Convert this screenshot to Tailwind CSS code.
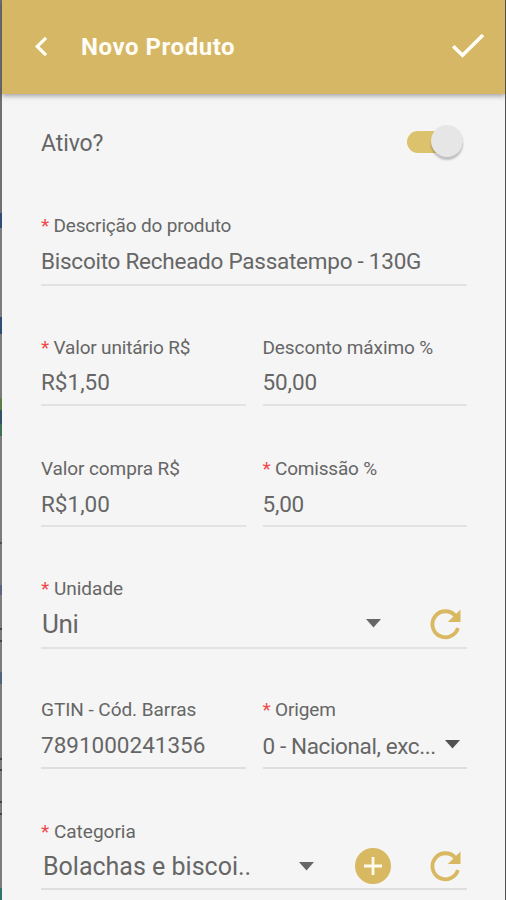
<!DOCTYPE html>
<html lang="pt-BR">
<head>
  <meta charset="UTF-8">
  <title>Novo Produto</title>
  <script src="https://cdn.jsdelivr.net/npm/@tailwindcss/browser@4"></script>
</head>
<body class="flex w-[506px] h-[900px] overflow-hidden bg-[#f5f5f5] font-[Roboto,sans-serif] text-[#666]">

  <!-- page behind, left edge -->
  <div class="w-[2px] h-full shrink-0 bg-[#7c7c7e] flex flex-col">
    <div class="h-[213px] bg-[#707074]"></div>
    <div class="h-[15px] bg-[#304d78]"></div>
    <div class="h-[89px]"></div>
    <div class="h-[17px] bg-[#304d78]"></div>
    <div class="h-[64px]"></div>
    <div class="h-[12px] bg-[#5d7d48]"></div>
    <div class="h-[14px] bg-[#35506a]"></div>
    <div class="h-[12px] bg-[#3f7052]"></div>
    <div class="h-[106px]"></div>
    <div class="h-[2px] bg-[#505058]"></div>
    <div class="h-[41px]"></div>
    <div class="h-[10px] bg-[#5c6480]"></div>
    <div class="h-[33px]"></div>
    <div class="h-[2px] bg-[#444]"></div>
    <div class="h-[10px]"></div>
    <div class="h-[2px] bg-[#444]"></div>
    <div class="h-[30px]"></div>
    <div class="h-[12px] bg-[#50647c]"></div>
    <div class="h-[74px]"></div>
    <div class="h-[2px] bg-[#444]"></div>
    <div class="h-[9px]"></div>
    <div class="h-[2px] bg-[#444]"></div>
    <div class="h-[30px]"></div>
    <div class="h-[2px] bg-[#444]"></div>
    <div class="h-[10px]"></div>
    <div class="h-[2px] bg-[#444]"></div>
    <div class="h-[73px]"></div>
    <div class="flex-1 bg-[#2f7468]"></div>
  </div>

  <div class="flex-1 min-w-0 h-full">
    <header class="h-[94px] bg-[#d5b766] shadow-[0_2px_5px_rgba(0,0,0,0.35)] flex items-center text-white">
      <svg class="ml-[32px] w-[14px] h-[22px]" viewBox="0 0 14 22" fill="none" stroke="#fffdf5" stroke-width="3.2"><path d="M12 1.800 3.200 10.500l8.800 8.700"/></svg>
      <h1 class="ml-[33px] text-[24px] leading-[30px] tracking-[0.55px] font-bold text-[#fffdf5]">Novo Produto</h1>
      <svg class="ml-auto mr-[20px] w-[34px] h-[26px] mb-[2px]" viewBox="0 0 34 26" fill="none" stroke="#fffdf5" stroke-width="3.6"><path d="M2.200 13.200 11.500 22.300 32 2"/></svg>
    </header>

    <main class="pl-[39px] pr-[38px]">
      <div class="mt-[33px] h-[30px] flex items-center">
        <span class="pt-[3px] text-[23px] leading-[30px] tracking-[-0.1px]">Ativo?</span>
        <div class="ml-auto mr-[4px] w-[56px] h-[22px] rounded-full bg-[#dcc26c] flex items-center justify-end">
          <div class="w-[32px] h-[32px] mb-[2px] shrink-0 rounded-full bg-[#e6e6e6] shadow-[0_3px_2px_rgba(0,0,0,0.22)]"></div>
        </div>
      </div>

      <div class="mt-[58px] h-[71px] border-b-2 border-[#e2e2e2]">
        <div class="text-[19px] leading-[22px] tracking-[-0.18px]"><span class="text-[#f04848]">*</span> Descrição do produto</div>
        <div class="mt-[10px] text-[22.5px] leading-[28px] tracking-[-0.25px]">Biscoito Recheado Passatempo - 130G</div>
      </div>

      <div class="mt-[50px] grid grid-cols-2 gap-[17px]">
        <div class="h-[70px] border-b-2 border-[#e2e2e2]">
          <div class="pt-px text-[19px] leading-[22px] tracking-[-0.18px]"><span class="text-[#f04848]">*</span> Valor unitário R$</div>
          <div class="mt-[9px] text-[22.5px] leading-[28px]">R$1,50</div>
        </div>
        <div class="h-[70px] border-b-2 border-[#e2e2e2]">
          <div class="pt-px text-[19px] leading-[22px] tracking-[-0.1px]">Desconto máximo %</div>
          <div class="mt-[9px] text-[22.5px] leading-[28px] tracking-[-0.1px]">50,00</div>
        </div>
      </div>

      <div class="mt-[51px] grid grid-cols-2 gap-[17px]">
        <div class="h-[70px] border-b-2 border-[#e2e2e2]">
          <div class="pt-px text-[19px] leading-[22px] tracking-[-0.1px]">Valor compra R$</div>
          <div class="mt-[10px] text-[22.5px] leading-[28px]">R$1,00</div>
        </div>
        <div class="h-[70px] border-b-2 border-[#e2e2e2]">
          <div class="pt-px text-[19px] leading-[22px] tracking-[-0.2px]"><span class="text-[#f04848]">*</span> Comissão %</div>
          <div class="mt-[10px] text-[22.5px] leading-[28px] tracking-[-0.2px]">5,00</div>
        </div>
      </div>

      <div class="mt-[51px] h-[71px] border-b-2 border-[#e2e2e2]">
        <div class="text-[19px] leading-[22px]"><span class="text-[#f04848]">*</span> Unidade</div>
        <div class="mt-[7px] h-[34px] flex items-center">
          <span class="pl-px text-[26px] leading-[34px] tracking-[-0.3px]">Uni</span>
          <svg class="ml-auto w-[15px] h-[9px] mb-[2px]" viewBox="0 0 15 9" fill="#666"><path d="M0 0h15L7.500 8.500z"/></svg>
          <svg class="ml-[49px] mr-[6px] w-[31px] h-[32px]" viewBox="0 0 31 32" fill="none"><path d="M27.900 20A13 13 0 1 1 25.500 8" stroke="#d8b860" stroke-width="3.800"/><path d="M30.500 1.500v12.500H17.800z" fill="#d8b860"/></svg>
        </div>
      </div>

      <div class="mt-[50px] grid grid-cols-2 gap-[17px]">
        <div class="h-[70px] border-b-2 border-[#dedede]">
          <div class="text-[19px] leading-[22px] tracking-[-0.05px]">GTIN - Cód. Barras</div>
          <div class="mt-[10px] text-[22.5px] leading-[28px]">7891000241356</div>
        </div>
        <div class="h-[70px] border-b-2 border-[#dedede]">
          <div class="text-[19px] leading-[22px] tracking-[-0.15px]"><span class="text-[#f04848]">*</span> Origem</div>
          <div class="mt-[11px] flex items-center">
            <span class="text-[22.5px] leading-[28px] tracking-[-0.38px]">0 - Nacional, exc...</span>
            <svg class="ml-auto mr-[7px] w-[15px] h-[9px] mb-[3px]" viewBox="0 0 15 9" fill="#505050"><path d="M0 0h15L7.500 8.500z"/></svg>
          </div>
        </div>
      </div>

      <div class="mt-[51px] h-[70px] border-b-2 border-[#dedede]">
        <div class="pt-px text-[19px] leading-[22px]"><span class="text-[#f04848]">*</span> Categoria</div>
        <div class="mt-[6px] h-[34px] flex items-center">
          <span class="pl-[2px] pt-px text-[25px] leading-[34px]">Bolachas e biscoi..</span>
          <svg class="ml-auto w-[15px] h-[9px]" viewBox="0 0 15 9" fill="#666"><path d="M0 0h15L7.500 8.500z"/></svg>
          <svg class="ml-[41px] w-[36px] h-[36px]" viewBox="0 0 36 36"><circle cx="18" cy="18" r="18" fill="#d8b860"/><path d="M18 9v18M9 18h18" stroke="#fffbee" stroke-width="2.800"/></svg>
          <svg class="ml-[39px] mr-[6px] w-[31px] h-[32px]" viewBox="0 0 31 32" fill="none"><path d="M27.900 20A13 13 0 1 1 25.500 8" stroke="#d8b860" stroke-width="3.800"/><path d="M30.500 1.500v12.500H17.800z" fill="#d8b860"/></svg>
        </div>
      </div>
    </main>
  </div>

  <div class="w-px h-full shrink-0 bg-[#505050]"></div>
</body>
</html>
